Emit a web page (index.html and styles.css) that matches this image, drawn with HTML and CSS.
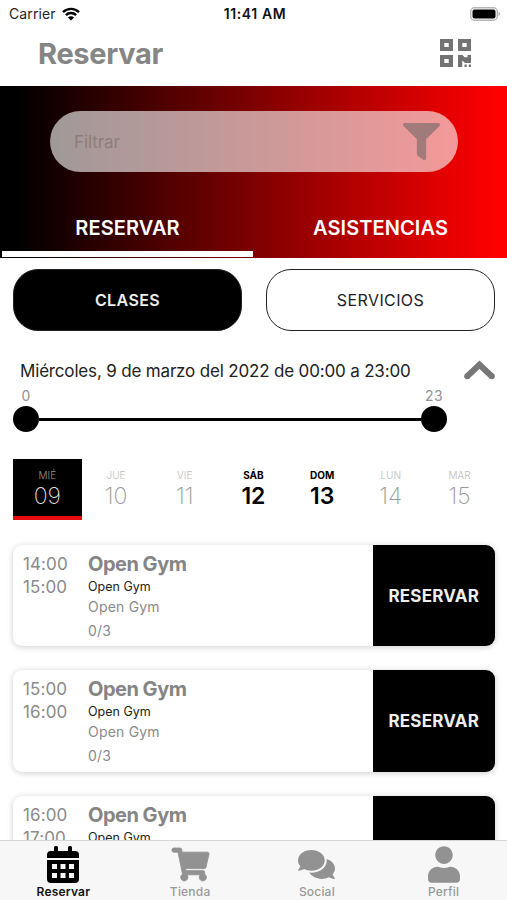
FILE: index.html
```
<!DOCTYPE html>
<html lang="es">
<head>
    <meta charset="UTF-8">
    <title>Reservar</title>
    <link rel="stylesheet" href="styles.css">
</head>
<body>
    <div class="app">
        <div class="status">
            <div class="carrier">
                <span>Carrier</span>
                <svg class="wifi" viewBox="0 0 18 14">
                    <path d="M1 5.2a11.4 11.4 0 0 1 16 0M3.9 8.1a7.3 7.3 0 0 1 10.2 0" fill="none" stroke="#000" stroke-width="2.4"/>
                    <path d="M9 13.6L5.9 10.5a4.4 4.4 0 0 1 6.2 0z"/>
                </svg>
            </div>
            <span class="clock">11:41 AM</span>
            <svg class="battery" viewBox="0 0 31 14">
                <rect x=".7" y=".7" width="26.6" height="12.6" rx="4" fill="#fff" stroke="#b5b5b5" stroke-width="1.4"/>
                <rect x="2.5" y="2.5" width="23" height="9" rx="2"/>
                <path d="M28.5 4.8v4.4q3-2.2 0-4.4z" fill="#aaa"/>
            </svg>
        </div>
        <div class="header">
            <h1>Reservar</h1>
            <svg class="qr" viewBox="0 0 31 28">
                <path fill-rule="evenodd" d="M0 0h13v12H0zM4.3 4v4h4.4V4zM18 0h13v12H18zM22.3 4v4h4.4V4zM0 16h13v12H0zM4.3 20v4h4.4v-4z"/>
                <path d="M18 16h4.5l2 2.2h3V16H31v8h-6l-2.8-2.500V28H18zM24.500 25.600h2.200V28h-2.200zM28.800 25.600H31V28h-2.200z"/>
            </svg>
        </div>

        <div class="hero">
            <div class="search">
                <span>Filtrar</span>
                <svg class="filter" viewBox="0 0 512 512">
                    <path d="M487.976 0H24.028C2.71 0-8.047 25.866 7.058 40.971L192 225.941V432c0 7.831 3.821 15.17 10.237 19.662l80 55.98C298.02 518.69 320 507.493 320 487.98V225.941l184.947-184.97C520.021 25.896 509.338 0 487.976 0z"/>
                </svg>
            </div>
            <div class="tabs">
                <div class="tab active">RESERVAR</div>
                <div class="tab">ASISTENCIAS</div>
            </div>
        </div>

        <div class="content">
            <div class="types">
                <div class="type selected">CLASES</div>
                <div class="type">SERVICIOS</div>
            </div>

            <div class="date">
                <span>Miércoles, 9 de marzo del 2022 de 00:00 a 23:00</span>
                <svg class="arrow" viewBox="0 0 31 20">
                    <path d="M3 16.500L15.500 4.700 28 16.500" fill="none" stroke="#777" stroke-width="6"/>
                    <circle cx="3.200" cy="16.200" r="3" fill="#777"/>
                    <circle cx="27.800" cy="16.200" r="3" fill="#777"/>
                </svg>
            </div>

            <div class="range">
                <div class="limits"><span>0</span><span>23</span></div>
                <div class="slider">
                    <div class="knob"></div>
                    <div class="track"></div>
                    <div class="knob"></div>
                </div>
            </div>

            <div class="days">
                <div class="day today"><small>MIÉ</small><b>09</b></div>
                <div class="day"><small>JUE</small><b>10</b></div>
                <div class="day"><small>VIE</small><b>11</b></div>
                <div class="day weekend"><small>SÁB</small><b>12</b></div>
                <div class="day weekend"><small>DOM</small><b>13</b></div>
                <div class="day"><small>LUN</small><b>14</b></div>
                <div class="day"><small>MAR</small><b>15</b></div>
            </div>

            <div class="list">
                <div class="card">
                    <div class="hours">14:00<br>15:00</div>
                    <div class="info">
                        <h2>Open Gym</h2>
                        <p class="room">Open Gym</p>
                        <p class="coach">Open Gym</p>
                        <p class="places">0/3</p>
                    </div>
                    <div class="book">RESERVAR</div>
                </div>
                <div class="card">
                    <div class="hours">15:00<br>16:00</div>
                    <div class="info">
                        <h2>Open Gym</h2>
                        <p class="room">Open Gym</p>
                        <p class="coach">Open Gym</p>
                        <p class="places">0/3</p>
                    </div>
                    <div class="book">RESERVAR</div>
                </div>
                <div class="card">
                    <div class="hours">16:00<br>17:00</div>
                    <div class="info">
                        <h2>Open Gym</h2>
                        <p class="room">Open Gym</p>
                    </div>
                    <div class="book"></div>
                </div>
            </div>
        </div>

        <div class="nav">
            <div class="item current">
                <svg viewBox="0 0 32 37">
                    <path d="M7 5V1.500Q7 0 8.500 0h1Q11 0 11 1.500V5h10V1.500Q21 0 22.500 0h1Q25 0 25 1.500V5h3q4 0 4 4v3H0V9q0-4 4-4z"/>
                    <path fill-rule="evenodd" d="M0 14h32v19q0 4-4 4H4q-4 0-4-4zM5 18v5h5v-5zM13.500 18v5h5v-5zM22 18v5h5v-5zM5 27v5h5v-5zM13.500 27v5h5v-5zM22 27v5h5v-5z"/>
                </svg>
                <span>Reservar</span>
            </div>
            <div class="item">
                <svg class="cart" viewBox="0 0 576 512">
                    <path d="M528.12 301.319l47.273-208C578.806 78.301 567.391 64 551.99 64H159.208l-9.166-44.81C147.758 8.021 137.93 0 126.529 0H24C10.745 0 0 10.745 0 24v16c0 13.255 10.745 24 24 24h69.883l70.248 343.435C147.325 417.1 136 435.222 136 456c0 30.928 25.072 56 56 56s56-25.072 56-56c0-15.674-6.447-29.835-16.824-40h209.647C430.447 426.165 424 440.326 424 456c0 30.928 25.072 56 56 56s56-25.072 56-56c0-22.172-12.888-41.332-31.579-50.405l5.517-24.276c3.413-15.018-8.002-29.319-23.403-29.319H218.117l-6.545-32h293.145c11.206 0 20.92-7.754 23.403-18.681z"/>
                </svg>
                <span>Tienda</span>
            </div>
            <div class="item">
                <svg class="chat" viewBox="0 0 576 512">
                    <path d="M416 192c0-88.4-93.1-160-208-160S0 103.6 0 192c0 34.3 14.1 65.9 38 92-13.4 30.2-35.5 54.2-35.8 54.5-2.2 2.3-2.8 5.7-1.5 8.7S4.8 352 8 352c36.6 0 66.9-12.3 88.7-25 32.2 15.7 70.3 25 111.3 25 114.9 0 208-71.6 208-160zm122 220c23.9-26 38-57.7 38-92 0-66.9-53.5-124.2-129.3-148.1.9 6.6 1.3 13.3 1.3 20.1 0 105.9-107.7 192-240 192-10.8 0-21.3-.8-31.7-1.9C207.8 439.6 281.8 480 368 480c41 0 79.1-9.2 111.3-25 21.8 12.7 52.1 25 88.7 25 3.2 0 6.1-1.9 7.3-4.8 1.3-2.9.7-6.3-1.5-8.7-.3-.3-22.4-24.2-35.8-54.5z"/>
                </svg>
                <span>Social</span>
            </div>
            <div class="item">
                <svg viewBox="0 0 448 512">
                    <path d="M224 248c68 0 122-56 122-124S292 0 224 0 102 56 102 124s54 124 122 124zm90 40c-24 0-46 18-90 18s-66-18-90-18C60 288 0 348 0 422v42c0 26 22 48 48 48h352c26 0 48-22 48-48v-42c0-74-60-134-134-134z"/>
                </svg>
                <span>Perfil</span>
            </div>
        </div>
    </div>
</body>
</html>
```
FILE: styles.css
```
*{
    margin: 0;
    padding: 0;
    box-sizing: border-box;
}
body{
    font-family: Inter, "Liberation Sans", sans-serif;
    background: #fff;
    color: #222;
}
svg{
    display: block;
    flex-shrink: 0;
}
.app{
    display: flex;
    flex-direction: column;
    width: 507px;
    height: 900px;
    overflow: hidden;
}
/*barra de estado*/
.status{
    display: grid;
    grid-template-columns: 1fr auto 1fr;
    align-items: center;
    height: 27px;
    padding: 0 6px 0 9px;
    font-size: 14px;
}
.carrier{
    display: flex;
    align-items: center;
    gap: 6px;
    letter-spacing: .1px;
}
.wifi{
    width: 18px;
    height: 14px;
}
.clock{
    font-weight: 600;
    letter-spacing: .6px;
    color: #111;
}
.battery{
    width: 31px;
    height: 14px;
    justify-self: end;
}
.header{
    display: flex;
    justify-content: space-between;
    height: 59px;
    padding: 8px 36px 0 38px;
}
.header h1{
    font-size: 29px;
    line-height: 38px;
    font-weight: 700;
    letter-spacing: -.3px;
    color: #858585;
}
.qr{
    width: 31px;
    height: 28px;
    margin-top: 4px;
    fill: #737373;
}
/*cabecera con degradado*/
.hero{
    display: flex;
    flex-direction: column;
    height: 172px;
    padding-top: 25px;
    background: linear-gradient(to right, #000 3%, #f00 98%);
}
.search{
    display: flex;
    align-items: center;
    justify-content: space-between;
    width: 408px;
    height: 61px;
    margin-left: 50px;
    padding: 0 18px 0 24px;
    border-radius: 31px;
    background: rgba(250, 250, 250, .61);
    font-size: 17px;
    letter-spacing: -.1px;
    color: #8d7c7c;
}
.filter{
    width: 37px;
    height: 37px;
    fill: #a17b79;
}
.tabs{
    display: flex;
    margin-top: 32px;
}
.tab{
    width: 251px;
    height: 53px;
    margin-left: 2px;
    padding-top: 11px;
    border-bottom: 6px solid transparent;
    font-size: 20px;
    line-height: 26px;
    font-weight: 600;
    letter-spacing: .1px;
    text-align: center;
    color: #fff;
}
.active{
    border-bottom-color: #fff;
}
.content{
    flex: 1;
    min-height: 0;
    padding: 11px 12px 0 13px;
    overflow: hidden;
}
.types{
    display: flex;
    gap: 24px;
}
.type{
    width: 229px;
    height: 62px;
    border: 1px solid #222;
    border-radius: 25px;
    font-size: 16px;
    line-height: 61px;
    letter-spacing: .4px;
    text-align: center;
}
.selected{
    background: #000;
    font-weight: 600;
    color: #eee;
}
.date{
    display: flex;
    justify-content: space-between;
    margin-top: 29px;
    padding-left: 7px;
    font-size: 17px;
    line-height: 23px;
    letter-spacing: -.170px;
}
.arrow{
    width: 31px;
    height: 20px;
}
.range{
    width: 434px;
    margin-top: 3px;
}
.limits{
    display: flex;
    justify-content: space-between;
    font-size: 14px;
    line-height: 20px;
    letter-spacing: .4px;
    color: #929292;
}
.limits span{
    width: 26px;
    text-align: center;
}
.slider{
    display: flex;
    align-items: center;
}
.knob{
    width: 26px;
    height: 26px;
    border-radius: 50%;
    background: #000;
}
.track{
    flex: 1;
    height: 3px;
    background: #000;
}
/*semana*/
.days{
    display: flex;
    margin-top: 27px;
}
.day{
    display: flex;
    flex-direction: column;
    align-items: center;
    width: 68.700px;
    height: 61px;
    padding-top: 10px;
    border-bottom: 4px solid transparent;
    color: #999;
}
.day small{
    font-size: 10px;
    line-height: 13px;
    font-weight: 300;
    color: #bbb;
}
.day b{
    font-size: 23px;
    line-height: 28px;
    font-weight: 200;
}
.today{
    background: #000;
    border-bottom-color: #e90b10;
    color: #ddd;
}
.today small{
    color: #999;
}
.weekend{
    color: #000;
}
.weekend small{
    font-weight: 700;
    color: #000;
}
.weekend b{
    font-weight: 600;
}
/*clases*/
.list{
    display: flex;
    flex-direction: column;
    gap: 24px;
    margin-top: 24.500px;
}
.card{
    display: flex;
    height: 101.500px;
    border-radius: 9px;
    background: #fff;
    box-shadow: 0 1px 6px rgba(0, 0, 0, .2);
    overflow: hidden;
}
.hours{
    width: 75px;
    padding: 8px 0 0 10px;
    font-size: 17px;
    line-height: 23px;
    letter-spacing: .1px;
    color: #8a8a8a;
}
.info{
    flex: 1;
    padding-top: 6px;
    font-size: 14px;
    letter-spacing: .2px;
    color: #8a8a8a;
}
.info h2{
    font-size: 20px;
    line-height: 26px;
    font-weight: 700;
    letter-spacing: -.5px;
    color: #858585;
}
.room{
    font-size: 12.500px;
    line-height: 20px;
    letter-spacing: 0;
    color: #222;
}
.coach{
    line-height: 20px;
}
.places{
    line-height: 28px;
}
.book{
    width: 122.500px;
    background: #000;
    font-size: 17px;
    line-height: 102px;
    font-weight: 700;
    letter-spacing: .2px;
    text-align: center;
    color: #eee;
}
/*menu inferior*/
.nav{
    display: flex;
    height: 60px;
    border-top: 1px solid #d5d5d5;
    background: #f7f7f7;
}
.item{
    display: flex;
    flex: 1;
    flex-direction: column;
    align-items: center;
    padding-top: 5px;
    font-size: 12px;
    line-height: 17px;
    font-weight: 500;
    letter-spacing: .2px;
    color: #999;
}
.item svg{
    width: 32px;
    height: 37px;
    fill: #929292;
}
.item .cart,
.item .chat{
    width: 37px;
}
.item .cart{
    stroke: #929292;
    stroke-width: 14px;
    overflow: visible;
}
.current{
    font-weight: 600;
    color: #111;
}
.current svg{
    fill: #000;
}
```
